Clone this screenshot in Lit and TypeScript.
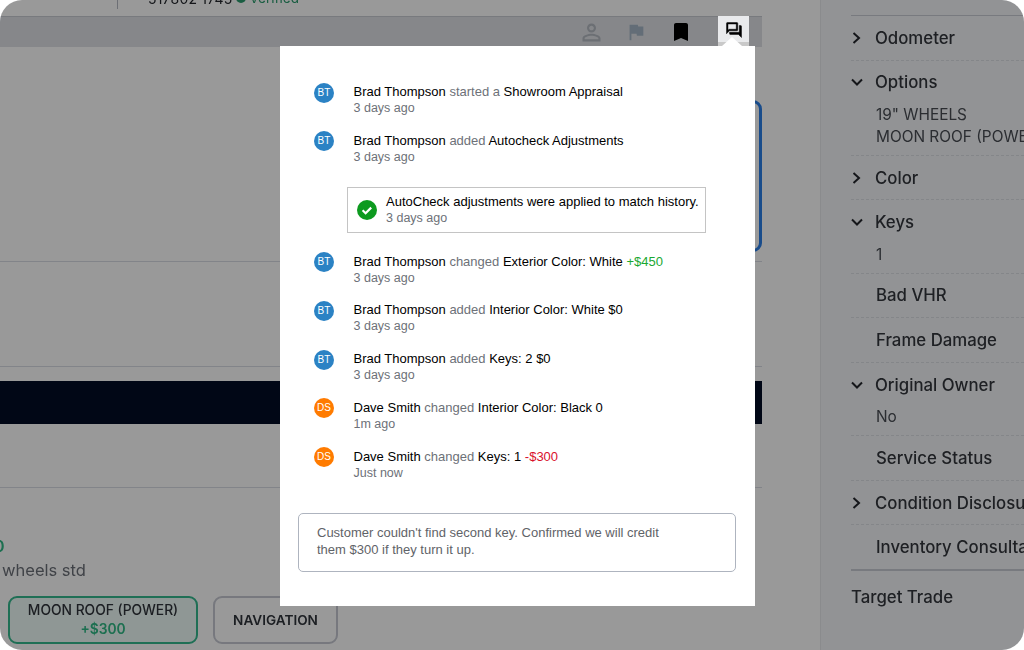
import { LitElement, html, css, svg } from "lit";
import { customElement } from "lit/decorators.js";

const ICONS = {
  person: svg`<path d="M12 5.9c1.16 0 2.1.94 2.1 2.1s-.94 2.1-2.1 2.1S9.9 9.16 9.9 8s.94-2.1 2.1-2.1m0 9c2.97 0 6.1 1.46 6.1 2.1v1.1H5.9V17c0-.64 3.13-2.1 6.1-2.1M12 4C9.79 4 8 5.79 8 8s1.79 4 4 4 4-1.79 4-4-1.79-4-4-4zm0 9c-2.67 0-8 1.34-8 4v3h16v-3c0-2.66-5.33-4-8-4z"/>`,
  flag: svg`<path d="M14.4 6L14 4H5v17h2v-7h5.6l.4 2h7V6z"/>`,
  bookmark: svg`<path d="M17 3H7c-1.1 0-1.99.9-1.99 2L5 21l7-3 7 3V5c0-1.1-.9-2-2-2z"/>`,
  forum: svg`<path d="M15 4v7H5.17L4 12.17V4h11m1-2H3c-.55 0-1 .45-1 1v14l4-4h10c.55 0 1-.45 1-1V3c0-.55-.45-1-1-1zm5 4h-2v9H6v2c0 .55.45 1 1 1h11l4 4V7c0-.55-.45-1-1-1z"/>`,
};

type Part = { t: string; k?: "verb" | "up" | "down" };
interface Entry { who: "BT" | "DS"; name: string; parts: Part[]; when: string; }

const before: Entry[] = [
  { who: "BT", name: "Brad Thompson", parts: [{ t: "started a", k: "verb" }, { t: "Showroom Appraisal" }], when: "3 days ago" },
  { who: "BT", name: "Brad Thompson", parts: [{ t: "added", k: "verb" }, { t: "Autocheck Adjustments" }], when: "3 days ago" },
];
const after: Entry[] = [
  { who: "BT", name: "Brad Thompson", parts: [{ t: "changed", k: "verb" }, { t: "Exterior Color: White" }, { t: "+$450", k: "up" }], when: "3 days ago" },
  { who: "BT", name: "Brad Thompson", parts: [{ t: "added", k: "verb" }, { t: "Interior Color: White $0" }], when: "3 days ago" },
  { who: "BT", name: "Brad Thompson", parts: [{ t: "added", k: "verb" }, { t: "Keys: 2 $0" }], when: "3 days ago" },
  { who: "DS", name: "Dave Smith", parts: [{ t: "changed", k: "verb" }, { t: "Interior Color: Black 0" }], when: "1m ago" },
  { who: "DS", name: "Dave Smith", parts: [{ t: "changed", k: "verb" }, { t: "Keys: 1" }, { t: "-$300", k: "down" }], when: "Just now" },
];

type Side = { label: string; chevron?: "right" | "down"; values?: string[] };
const sideItems: Side[] = [
  { label: "Odometer", chevron: "right" },
  { label: "Options", chevron: "down", values: ['19" WHEELS', "MOON ROOF (POWER)"] },
  { label: "Color", chevron: "right" },
  { label: "Keys", chevron: "down", values: ["1"] },
  { label: "Bad VHR" },
  { label: "Frame Damage" },
  { label: "Original Owner", chevron: "down", values: ["No"] },
  { label: "Service Status" },
  { label: "Condition Disclosure", chevron: "right" },
  { label: "Inventory Consultant" },
];

@customElement("app-root")
export class AppRoot extends LitElement {
  static styles = css`
    :host { display: block; width: 1024px; height: 650px; background: #fff; overflow: hidden; }
    .frame { position: relative; width: 1024px; height: 650px; border-radius: 22px; overflow: hidden; display: flex; background: #fff; font-family: Inter, "Noto Sans", sans-serif; color: #33363c; filter: blur(.3px); }
    .main { width: 820px; flex: none; display: flex; flex-direction: column; }
    .top { height: 16px; overflow: hidden; display: flex; padding-left: 117px; align-items: flex-start; }
    .top-inner { display: flex; align-items: center; height: 22px; margin-top: -13px; font-size: 14px; white-space: nowrap; flex: none; }
    .divider { width: 1px; height: 22px; background: #b6bac3; margin-right: 30px; }
    .vin { color: #23262c; letter-spacing: .2px; }
    .verified { color: #2c9c6e; display: flex; align-items: center; gap: 3px; margin-left: 4px; font-size: 13.5px; }
    .dot { width: 10px; height: 10px; border-radius: 50%; background: #2c9c6e; }
    .tabbar { height: 31px; margin-right: 58px; background: #dfe2e7; border-top: 1px solid #c9ccd3; box-sizing: border-box; display: flex; justify-content: flex-end; padding-right: 13px; align-items: center; }
    .ic { width: 44.5px; display: flex; justify-content: center; align-items: center; height: 100%; }
    .ic svg { display: block; fill: currentColor; }
    .ic.person { color: #b4b9c1; }
    .ic.flag { color: #a6b6c6; }
    .ic.book { color: #000; margin-right: 15px; }
    .ic.active { width: 31px; background: #e9eaec; color: #000; position: relative; z-index: 2; align-self: stretch; height: auto; padding-bottom: 3px; box-sizing: border-box; margin-top: -1px; }
    .ic.active::after { content: ""; position: absolute; left: 0; right: 0; bottom: 0; height: 5px; background: #c9c9c9; }
    .ic.active svg { stroke: currentColor; stroke-width: .6; }
    .content { flex: 1; margin-right: 58px; display: flex; flex-direction: column; min-height: 0; overflow: hidden; }
    .card { height: 152px; box-sizing: border-box; margin: 53px 0 9px 300px; border: 3px solid #2b7fe8; border-radius: 9px; flex: none; }
    .rule { height: 1px; background: #d9dce4; flex: none; }
    .band { height: 43px; margin: 14px 0 63px; background: #030d26; flex: none; }
    .gap { height: 104px; flex: none; }
    .amount { margin: 48px 0 0 -6px; font-size: 16px; font-weight: 600; color: #2fb985; line-height: 20px; }
    .std { margin: 2px 0 0 2px; font-size: 16.5px; line-height: 24px; color: #6c7078; }
    .btns { display: flex; gap: 15px; padding-left: 8px; margin-top: 14px; }
    .btn { box-sizing: border-box; height: 48px; border-radius: 9px; display: flex; flex-direction: column; align-items: center; justify-content: center; font-size: 13.8px; font-weight: 500; color: #30343b; line-height: 19px; }
    .btn.on { width: 190px; border: 2px solid #34b98e; background: #eefcf8; }
    .btn.off { width: 125px; border: 2px solid #c6c9d2; font-weight: 600; font-size: 13.6px; }
    .btn b { color: #2fb985; font-weight: 600; }
    .side { flex: 1; background: #f3f5f8; border-left: 1px solid #e6e8ec; padding: 15px 0 0 30px; box-sizing: border-box; overflow: hidden; min-width: 0; }
    .list { border-top: 1px solid #c9ccd4; margin-right: -40px; }
    .item { border-bottom: 1px dashed #dcdfe5; }
    .item:last-child { border-bottom: 2px solid #c9ccd4; }
    .head { height: 43.6px; display: flex; align-items: center; font-size: 16.8px; font-weight: 500; white-space: nowrap; }
    .chev { width: 24px; flex: none; display: flex; align-items: center; }
    .chev svg { display: block; fill: none; stroke: #23262c; stroke-width: 2; }
    .nochev { padding-left: 25px; }
    .values { padding: 0 0 6.67px 25px; font-size: 15.4px; line-height: 22px; color: #484c53; white-space: nowrap; }
    .target { margin-top: 14px; font-size: 16.8px; font-weight: 500; line-height: 24px; }
    .scrim { position: absolute; inset: 0; background: rgba(0, 0, 0, .4); z-index: 1; }
    .pop { position: absolute; z-index: 3; left: 280px; top: 46px; width: 475px; box-sizing: border-box; background: #fff; padding: 37px 19px 34px 18px; font-family: "Liberation Sans", Arial, sans-serif; font-size: 13px; line-height: 17px; color: #000; }
    .pop::before { content: ""; position: absolute; top: -9px; left: 442px; border-left: 10px solid transparent; border-right: 10px solid transparent; border-bottom: 9px solid #fff; }
    .feed { display: flex; flex-direction: column; gap: 15px; padding-left: 16px; }
    .row { display: flex; gap: 19.5px; height: 33.75px; }
    .av { width: 20px; height: 20px; border-radius: 50%; margin-top: -.5px; flex: none; display: flex; align-items: center; justify-content: center; color: #fff; font-size: 10px; line-height: 20px; }
    .av.BT { background: #2b82c4; }
    .av.DS { background: #ff7b00; }
    .when { font-size: 12.5px; color: #6d7178; }
    .verb { color: #6d7178; }
    .up { color: #1aa832; }
    .down { color: #d9112c; }
    .sys { box-sizing: border-box; margin: 6.5px 0 4.5px 33px; width: 359px; height: 46px; border: 1px solid #c4c4c4; display: flex; align-items: center; gap: 9px; padding-left: 9px; }
    .sys svg { flex: none; display: block; }
    .note { margin-top: 31.75px; box-sizing: border-box; height: 59px; border: 1px solid #aeb4bf; border-radius: 5px; padding: 10px 18px; font-size: 13px; color: #5f6368; }
  `;

  private entry(e: Entry) {
    return html`<div class="row">
      <div class="av ${e.who}">${e.who}</div>
      <div>
        <div>${e.name} ${e.parts.map((p, i) => html`${i ? " " : ""}<span class=${p.k ?? ""}>${p.t}</span>`)}</div>
        <div class="when">${e.when}</div>
      </div>
    </div>`;
  }

  private sideItem(s: Side) {
    return html`<div class="item">
      <div class="head ${s.chevron ? "" : "nochev"}">
        ${s.chevron === "right"
          ? html`<span class="chev"><svg width="12" height="14" viewBox="0 0 12 14"><path d="M2.5 2l5.5 5-5.5 5"/></svg></span>`
          : s.chevron === "down"
          ? html`<span class="chev"><svg width="12" height="14" viewBox="0 0 12 14"><path d="M1 4.5l5 5 5-5"/></svg></span>`
          : ""}
        <span>${s.label}</span>
      </div>
      ${s.values ? html`<div class="values">${s.values.map((v) => html`<div>${v}</div>`)}</div>` : ""}
    </div>`;
  }

  render() {
    return html`<div class="frame">
      <div class="main">
        <div class="top">
          <div class="top-inner">
            <span class="divider"></span>
            <span class="vin">517802 1745</span>
            <span class="verified"><span class="dot"></span>Verified</span>
          </div>
        </div>
        <div class="tabbar">
          <div class="ic person"><svg width="27" height="27" viewBox="0 0 24 24">${ICONS.person}</svg></div>
          <div class="ic flag"><svg width="22" height="22" viewBox="0 0 24 24">${ICONS.flag}</svg></div>
          <div class="ic book"><svg width="24" height="24" viewBox="0 0 24 24">${ICONS.bookmark}</svg></div>
          <div class="ic active"><svg width="18" height="18" viewBox="0 0 24 24">${ICONS.forum}</svg></div>
        </div>
        <div class="content">
          <div class="card"></div>
          <div class="rule"></div>
          <div class="gap"></div>
          <div class="rule"></div>
          <div class="band"></div>
          <div class="rule"></div>
          <div class="amount">0</div>
          <div class="std">wheels std</div>
          <div class="btns">
            <div class="btn on"><span>MOON ROOF (POWER)</span><b>+$300</b></div>
            <div class="btn off">NAVIGATION</div>
          </div>
        </div>
      </div>
      <div class="side">
        <div class="list">${sideItems.map((s) => this.sideItem(s))}</div>
        <div class="target">Target Trade</div>
      </div>
      <div class="scrim"></div>
      <div class="pop">
        <div class="feed">
          ${before.map((e) => this.entry(e))}
          <div class="sys">
            <svg width="20" height="20" viewBox="0 0 20 20"><circle cx="10" cy="10" r="10" fill="#0d9a1f"/><path d="M5.6 10.2l3 3 5.6-5.6" fill="none" stroke="#fff" stroke-width="2.2"/></svg>
            <div>
              <div>AutoCheck adjustments were applied to match history.</div>
              <div class="when">3 days ago</div>
            </div>
          </div>
          ${after.map((e) => this.entry(e))}
        </div>
        <div class="note">Customer couldn't find second key. Confirmed we will credit<br />them $300 if they turn it up.</div>
      </div>
    </div>`;
  }
}
